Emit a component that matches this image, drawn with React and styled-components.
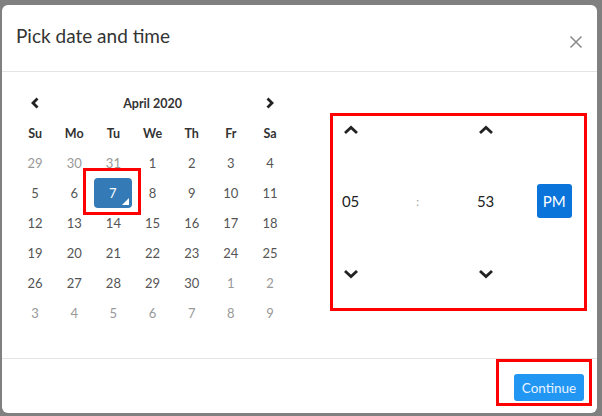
import styled, { createGlobalStyle } from "styled-components";

const GlobalStyle = createGlobalStyle`
  html, body {
    margin: 0;
    padding: 0;
    background: #808080;
    font-family: Lato, "Open Sans", sans-serif;
  }
`;

const Backdrop = styled.div`
  width: 602px;
  height: 416px;
  padding: 5px 0 0 2px;
  box-sizing: border-box;
  overflow: hidden;
`;

const Modal = styled.div`
  width: 595px;
  height: 408px;
  background: #fff;
  border-radius: 6px;
  display: flex;
  flex-direction: column;
`;

const Header = styled.div`
  height: 67px;
  border-bottom: 1px solid #e5e5e5;
  display: flex;
  align-items: center;
  justify-content: space-between;
  padding: 0 14px 0 14px;
  box-sizing: border-box;
  flex-shrink: 0;
`;

const Title = styled.h4`
  margin: 0;
  font-size: 19px;
  font-weight: 400;
  color: #333;
  padding-bottom: 6px;
`;

const Close = styled.button`
  border: none;
  background: none;
  padding: 0;
  margin-top: 8px;
  width: 14px;
  height: 14px;
  display: flex;
  cursor: pointer;
`;

const Body = styled.div`
  flex: 1;
  display: flex;
  align-items: flex-start;
  padding: 16px 10px 0 13.5px;
`;

const Calendar = styled.div`
  display: grid;
  grid-template-columns: repeat(7, 39.17px);
  grid-auto-rows: 30px;
  font-size: 13px;
`;

const Cell = styled.div`
  display: flex;
  align-items: center;
  justify-content: center;
  color: ${(p) => (p.$muted ? "#999" : "#555")};
`;

const NavCell = styled(Cell)`
  cursor: pointer;
`;

const MonthTitle = styled(Cell)`
  grid-column: span 5;
  font-weight: 700;
  font-size: 12.5px;
  color: #333;
`;

const DayName = styled(Cell)`
  font-weight: 700;
  font-size: 12.5px;
  color: #333;
`;

const Selected = styled(Cell)`
  position: relative;
  background: #337ab7;
  color: #fff;
  border-radius: 4px;
  margin-right: 1px;

  &::before {
    content: "";
    position: absolute;
    right: 3px;
    bottom: 3px;
    border-style: solid;
    border-width: 0 0 7px 7px;
    border-color: transparent transparent #fff transparent;
  }

  &::after {
    content: "";
    position: absolute;
    left: -11px;
    right: -9px;
    top: -10px;
    bottom: -7px;
    border: 3px solid #f00;
  }
`;

const TimePanel = styled.div`
  margin: 25px 0 0 40px;
  width: 257px;
  height: 198px;
  border: 3px solid #f00;
  box-sizing: border-box;
  display: grid;
  grid-template-columns: 36px 98px 38px 1fr;
  grid-template-rows: 28px 114px 32px;
  align-items: center;
`;

const TimeCell = styled.div`
  display: flex;
  justify-content: ${(p) => (p.$end ? "flex-end" : "center")};
  padding-right: ${(p) => (p.$end ? "12px" : "0")};
  align-items: center;
  font-size: 15px;
  color: #222;
`;

const Colon = styled(TimeCell)`
  font-size: 11px;
  color: #999;
`;

const Period = styled.button`
  width: 35px;
  height: 34px;
  border: none;
  border-radius: 3px;
  background: #0a74da;
  color: #fff;
  font-family: inherit;
  font-size: 15px;
  padding: 0;
  cursor: pointer;
`;

const Footer = styled.div`
  height: 55px;
  border-top: 1px solid #e5e5e5;
  display: flex;
  justify-content: flex-end;
  align-items: flex-start;
  padding-right: 5px;
  box-sizing: border-box;
  flex-shrink: 0;
`;

const Highlight = styled.div`
  border: 3px solid #f00;
  padding: 12px 5px 2px 15px;
`;

const ContinueButton = styled.button`
  display: block;
  width: 70px;
  height: 27px;
  background: #2196f3;
  color: #e8f3ff;
  border: none;
  border-radius: 3px;
  font-family: inherit;
  font-size: 13.5px;
  padding: 0;
  cursor: pointer;
`;

const Chevron = ({ dir = "up" }) => {
  const shapes = {
    up: { w: 16, h: 12, pts: "2,9 8,3.5 14,9" },
    down: { w: 16, h: 12, pts: "2,3 8,8.5 14,3" },
    left: { w: 12, h: 14, pts: "8.5,2.5 4,7 8.5,11.5" },
    right: { w: 12, h: 14, pts: "3.5,2.5 8,7 3.5,11.5" },
  };
  const s = shapes[dir];
  return (
    <svg width={s.w} height={s.h} viewBox={`0 0 ${s.w} ${s.h}`}>
      <polyline points={s.pts} fill="none" stroke="#222" strokeWidth="2.8" strokeLinecap="butt" strokeLinejoin="miter" />
    </svg>
  );
};

const weeks = [
  [[29, 1], [30, 1], [31, 1], [1], [2], [3], [4]],
  [[5], [6], [7], [8], [9], [10], [11]],
  [[12], [13], [14], [15], [16], [17], [18]],
  [[19], [20], [21], [22], [23], [24], [25]],
  [[26], [27], [28], [29], [30], [1, 1], [2, 1]],
  [[3, 1], [4, 1], [5, 1], [6, 1], [7, 1], [8, 1], [9, 1]],
];

const dayNames = ["Su", "Mo", "Tu", "We", "Th", "Fr", "Sa"];

export default function App() {
  return (
    <>
      <GlobalStyle />
      <Backdrop>
        <Modal>
          <Header>
            <Title>Pick date and time</Title>
            <Close aria-label="Close">
              <svg width="14" height="14" viewBox="0 0 14 14">
                <path d="M1.5 1.5 L12.5 12.5 M12.5 1.5 L1.5 12.5" stroke="#888" strokeWidth="1.5" />
              </svg>
            </Close>
          </Header>
          <Body>
            <Calendar>
              <NavCell>
                <Chevron dir="left" />
              </NavCell>
              <MonthTitle>April 2020</MonthTitle>
              <NavCell>
                <Chevron dir="right" />
              </NavCell>
              {dayNames.map((d) => (
                <DayName key={d}>{d}</DayName>
              ))}
              {weeks.flat().map(([n, muted], i) =>
                n === 7 && !muted ? (
                  <Selected key={i}>{n}</Selected>
                ) : (
                  <Cell key={i} $muted={!!muted}>
                    {n}
                  </Cell>
                )
              )}
            </Calendar>
            <TimePanel>
              <TimeCell><Chevron dir="up" /></TimeCell>
              <TimeCell />
              <TimeCell><Chevron dir="up" /></TimeCell>
              <TimeCell />
              <TimeCell>05</TimeCell>
              <Colon>:</Colon>
              <TimeCell>53</TimeCell>
              <TimeCell $end>
                <Period>PM</Period>
              </TimeCell>
              <TimeCell><Chevron dir="down" /></TimeCell>
              <TimeCell />
              <TimeCell><Chevron dir="down" /></TimeCell>
              <TimeCell />
            </TimePanel>
          </Body>
          <Footer>
            <Highlight>
              <ContinueButton>Continue</ContinueButton>
            </Highlight>
          </Footer>
        </Modal>
      </Backdrop>
    </>
  );
}
